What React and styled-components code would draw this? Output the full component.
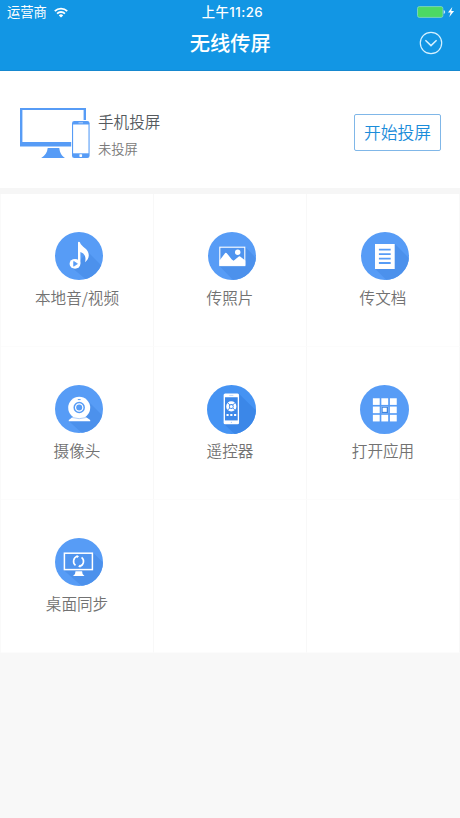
import styled, { createGlobalStyle } from "styled-components";

const GlobalStyle = createGlobalStyle`
  body {
    margin: 0;
    background: #f8f8f8;
    font-family: "Noto Sans CJK SC", "Noto Sans", sans-serif;
  }
`;

const Page = styled.div`
  display: flex;
  flex-direction: column;
  height: 818px;
  width: 460px;
  overflow: hidden;
  background: #f8f8f8;
`;

const Top = styled.header`
  height: 70px;
  background: #1296e4;
  border-bottom: 1px solid #1688cf;
  color: #fff;
`;

const StatusBar = styled.div`
  display: grid;
  grid-template-columns: 1fr auto 1fr;
  align-items: center;
  height: 24px;
  padding: 0 5px 0 7px;
  font-size: 13.3px;
  line-height: 24px;
`;

const Carrier = styled.div`
  display: flex;
  align-items: center;
  gap: 7px;
`;

const Clock = styled.div`
  padding-left: 3px;
  font-family: Inter, "Noto Sans CJK SC", sans-serif;
  font-size: 13.3px;
  font-weight: 500;
  letter-spacing: 0.45px;
`;

const Battery = styled.div`
  display: flex;
  justify-content: flex-end;
`;

const TitleBar = styled.div`
  display: grid;
  grid-template-columns: 1fr auto 1fr;
  align-items: center;
  height: 37px;
  padding: 0 17.5px 0 18px;
`;

const Title = styled.h1`
  grid-column: 2;
  margin: 0;
  font-size: 20.3px;
  font-weight: 500;
  line-height: 37px;
`;

const MenuButton = styled.button`
  justify-self: end;
  display: flex;
  padding: 0;
  border: 0;
  background: none;
`;

const CastPanel = styled.section`
  display: flex;
  align-items: center;
  height: 117px;
  padding: 0 19px 0 20px;
  background: #fff;
  border-bottom: 6px solid #f6f6f6;
  box-sizing: content-box;
`;

const CastInfo = styled.div`
  flex: 1;
  margin: 9px 0 0 8px;
`;

const CastName = styled.div`
  font-size: 15.6px;
  font-weight: 350;
  line-height: 24px;
  color: #555a5e;
`;

const CastState = styled.div`
  margin-top: 5px;
  font-size: 13.3px;
  font-weight: 350;
  line-height: 22px;
  color: #7a7a7a;
`;

const CastButton = styled.button`
  width: 87px;
  height: 37px;
  margin-top: 6px;
  padding: 0;
  border: 1px solid #80b7e8;
  border-radius: 2px;
  background: #fff;
  color: #1a8cda;
  font-family: inherit;
  font-size: 16.8px;
  font-weight: 350;
  line-height: 33px;
`;

const Grid = styled.main`
  display: grid;
  grid-template-columns: repeat(3, 153px);
  grid-auto-rows: 153px;
  padding-left: 1px;
  background: #fafafa;
`;

const Cell = styled.div`
  display: flex;
  flex-direction: column;
  align-items: center;
  box-sizing: border-box;
  padding-top: ${(props) => (props.$large ? "37.5px" : "38px")};
  background: #fff;
  border-right: 1px solid #f8f8f8;
  border-bottom: 1px solid #fcfcfc;
`;

const Label = styled.div`
  margin-top: ${(props) => (props.$large ? "4.5px" : "5px")};
  font-size: 15.6px;
  font-weight: 350;
  line-height: 24px;
  color: #727272;
`;

const Icon = styled.svg`
  display: block;
  flex: none;
  margin-left: 3px;
`;

const Plain = styled.svg`
  display: block;
  flex: none;
`;

const DevicesArt = styled(Plain)`
  margin-top: 6px;
`;

const BLUE = "#579cf6";
const SHADE = "#4c91ec";

const Wifi = () => (
  <Plain width="14" height="11" viewBox="0 0 14 11" fill="none" stroke="#fff" strokeWidth="1.8">
    <path d="M0.8 4.2a8.8 8.8 0 0 1 12.4 0" />
    <path d="M3.1 6.6a5.5 5.5 0 0 1 7.8 0" />
    <path d="M7 10.6 4.8 8.4a3.1 3.1 0 0 1 4.4 0z" fill="#fff" stroke="none" />
  </Plain>
);

const BatteryIcon = () => (
  <Plain width="38" height="12" viewBox="0 0 38 12">
    <rect x="0.5" y="0.6" width="25.4" height="10.8" rx="1.8" fill="#4cd964" stroke="#86d8c4" strokeWidth="0.8" />
    <path d="M26.7 4a2.1 2.1 0 0 1 0 4z" fill="#c4e7f8" />
    <path d="M35.3 1 31 6.6h2.6L32.3 11l4.8-6h-2.8z" fill="#fff" />
  </Plain>
);

const Chevron = () => (
  <Plain width="24" height="24" viewBox="0 0 24 24" fill="none" stroke="#d5f1ff">
    <circle cx="12" cy="12" r="10.7" strokeWidth="1.2" />
    <path d="m6.4 9.2 5.6 5.4 5.6-5.4" strokeWidth="1.5" />
  </Plain>
);

const Devices = () => (
  <DevicesArt width="70" height="52" viewBox="0 0 70 52">
    <path d="M0 1h66v38.5H0zM2.4 3v32h61.2V3z" fill={BLUE} fillRule="evenodd" />
    <path d="M27.7 41h11.6c.6 4.6 2 7.7 5.7 9.9H21.200c4-2.200 6-5.300 6.500-9.900z" fill={BLUE} />
    <rect x="51.2" y="13" width="19" height="39" fill="#fff" />
    <rect x="52" y="14" width="17.600" height="37" rx="2.300" fill={BLUE} />
    <rect x="53.100" y="17.500" width="15.400" height="28.800" fill="#fff" />
    <path d="M58.500 15.800h4.500" stroke="#cfe1fa" strokeWidth="0.800" />
    <rect x="59.400" y="47.200" width="2.700" height="2.700" rx="0.600" fill="#fff" />
  </DevicesArt>
);

// Long shadows are cut off by the disc
const Disc = ({ id, size = 48, fill = BLUE, shade = SHADE, shadow, children }) => (
  <Icon width={size} height={size} viewBox="0 0 48 48">
    <clipPath id={id}>
      <circle cx="24" cy="24" r="24" />
    </clipPath>
    <circle cx="24" cy="24" r="24" fill={fill} />
    {shadow && <path d={shadow} fill={shade} clipPath={`url(#${id})`} />}
    {children}
  </Icon>
);

const Music = () => (
  <Disc id="music" shadow="M33 20 50 37V50H34L16 35l8-6z">
    <path
      d="M23 10.500q0-.8.900-.8t1.100.9c1 4.300 8.800 6 8.800 12.700 0 3-1.600 5.300-3.800 7 1.300-4.300.2-8.600-4.600-10.200v11.500H23z"
      fill="#fff"
    />
    <ellipse cx="20" cy="31.800" rx="5.400" ry="4.900" fill="#fff" />
    <path d="m18.700 29.400 3.700 2.400-3.700 2.400z" fill={BLUE} stroke={BLUE} strokeWidth="0.800" strokeLinejoin="round" />
  </Disc>
);

const Photo = () => (
  <Disc id="photo" shadow="M37.300 15 50 28V50H27L11.500 34z">
    <rect x="11.800" y="15.200" width="25" height="18.400" fill="#4f94ef" stroke="#fff" strokeWidth="1.100" />
    <circle cx="29.700" cy="20.300" r="2.700" fill="#fff" />
    <path d="M11.500 28.500 17.200 21q.8-.6 1.600.2l5 6.300 1.800 1.300 5.200-4.200q.7-.5 1.300 0l5.200 4v5H11.500z" fill="#fff" />
  </Disc>
);

const Document = () => (
  <Disc id="document" shadow="M34 12 50 28V50H27.500L14.300 37z">
    <rect x="14" y="12" width="19.700" height="25" fill="#fff" />
    <path d="M17.900 17.700h11.800M17.900 22.200h11.800M17.900 26.600h11.800M17.900 31h11.800" stroke={BLUE} strokeWidth="1.800" />
  </Disc>
);

const Webcam = () => (
  <Disc id="webcam" shadow="M32 15 50 33V50H29L14 36.300z">
    <circle cx="24.200" cy="22.700" r="11" fill="#fff" />
    <path d="M19 31h10.400l5.800 4v1.300H13.800V35z" fill="#fff" />
    <path d="M16.500 32.400q7.700 2.600 15.400 0" stroke="#8db9f5" strokeWidth="0.700" fill="none" />
    <circle cx="24.200" cy="22.500" r="5" fill="none" stroke={BLUE} strokeWidth="1.500" />
    <circle cx="24.200" cy="22.500" r="3" fill={BLUE} />
    <path d="M22.800 14.600h2.800" stroke={BLUE} strokeWidth="1" />
  </Disc>
);

const Remote = () => (
  <Disc id="remote" size={49} fill="#4593f3" shade="#3b87e8" shadow="M31.300 8.500 50 27V50H29L16.500 38z">
    <rect x="16.300" y="8.300" width="15.100" height="30.200" rx="1.500" fill="#fff" />
    <rect x="17.600" y="12" width="12.500" height="22.700" fill="#3d88e9" />
    <path d="M21.800 10.200h4" stroke="#a8cbf8" strokeWidth="0.700" />
    <circle cx="23.800" cy="21" r="3.700" fill="none" stroke="#fff" strokeWidth="2.600" />
    <path d="m20 17.200 7.600 7.600m0-7.600L20 24.800" stroke="#3d88e9" strokeWidth="0.900" />
    <circle cx="23.800" cy="21" r="1.500" fill="#fff" />
    <path d="M19.100 29.300h2.100m1.600 0h2.100m1.600 0h2.100" stroke="#fff" strokeWidth="2" />
    <circle cx="23.900" cy="36.600" r="0.700" fill="#a8cbf8" />
  </Disc>
);

const Apps = () => (
  <Disc id="apps" size={49}>
    {[13, 21.100, 29.200].map((y) =>
      [12.600, 20.900, 29.300].map((x) => <rect key={`${x}-${y}`} x={x} y={y} width="6.700" height="6.500" fill="#fff" />)
    )}
    <rect x="21" y="21.200" width="6.400" height="6.300" fill="#3c83df" />
    <rect x="22.200" y="22.300" width="4" height="4" fill="#fff" />
  </Disc>
);

const DesktopSync = () => (
  <Disc id="desktop" shadow="M38 14.500 50 26.500V50H29L8.500 32z">
    <rect x="9.400" y="15.200" width="28" height="16.400" fill="#4f94ef" stroke="#fff" strokeWidth="1.500" />
    <path d="M20.500 33.200h6.600l.5 2.800 1.900 1.900H18l2-1.900z" fill="#fff" />
    <g fill="none" stroke="#fff" strokeWidth="1.600">
      <path d="M22.200 18.300a5.200 5.200 0 0 0-1.700 9" />
      <path d="M24.900 28.300a5.200 5.200 0 0 0 1.700-9" />
    </g>
    <path d="m21.700 16.900 2.300 1.300-2 2zM25.400 29.700l-2.300-1.300 2-2z" fill="#fff" />
  </Disc>
);

const features = [
  { name: "本地音/视频", icon: Music },
  { name: "传照片", icon: Photo },
  { name: "传文档", icon: Document },
  { name: "摄像头", icon: Webcam },
  { name: "遥控器", icon: Remote, large: true },
  { name: "打开应用", icon: Apps, large: true },
  { name: "桌面同步", icon: DesktopSync },
];

const App = () => (
  <Page>
    <GlobalStyle />
    <Top>
      <StatusBar>
        <Carrier>
          运营商
          <Wifi />
        </Carrier>
        <Clock>上午11:26</Clock>
        <Battery>
          <BatteryIcon />
        </Battery>
      </StatusBar>
      <TitleBar>
        <Title>无线传屏</Title>
        <MenuButton aria-label="菜单">
          <Chevron />
        </MenuButton>
      </TitleBar>
    </Top>
    <CastPanel>
      <Devices />
      <CastInfo>
        <CastName>手机投屏</CastName>
        <CastState>未投屏</CastState>
      </CastInfo>
      <CastButton>开始投屏</CastButton>
    </CastPanel>
    <Grid>
      {features.map(({ name, icon: FeatureIcon, large }) => (
        <Cell key={name} $large={large}>
          <FeatureIcon />
          <Label $large={large}>{name}</Label>
        </Cell>
      ))}
      <Cell />
      <Cell />
    </Grid>
  </Page>
);

export default App;
